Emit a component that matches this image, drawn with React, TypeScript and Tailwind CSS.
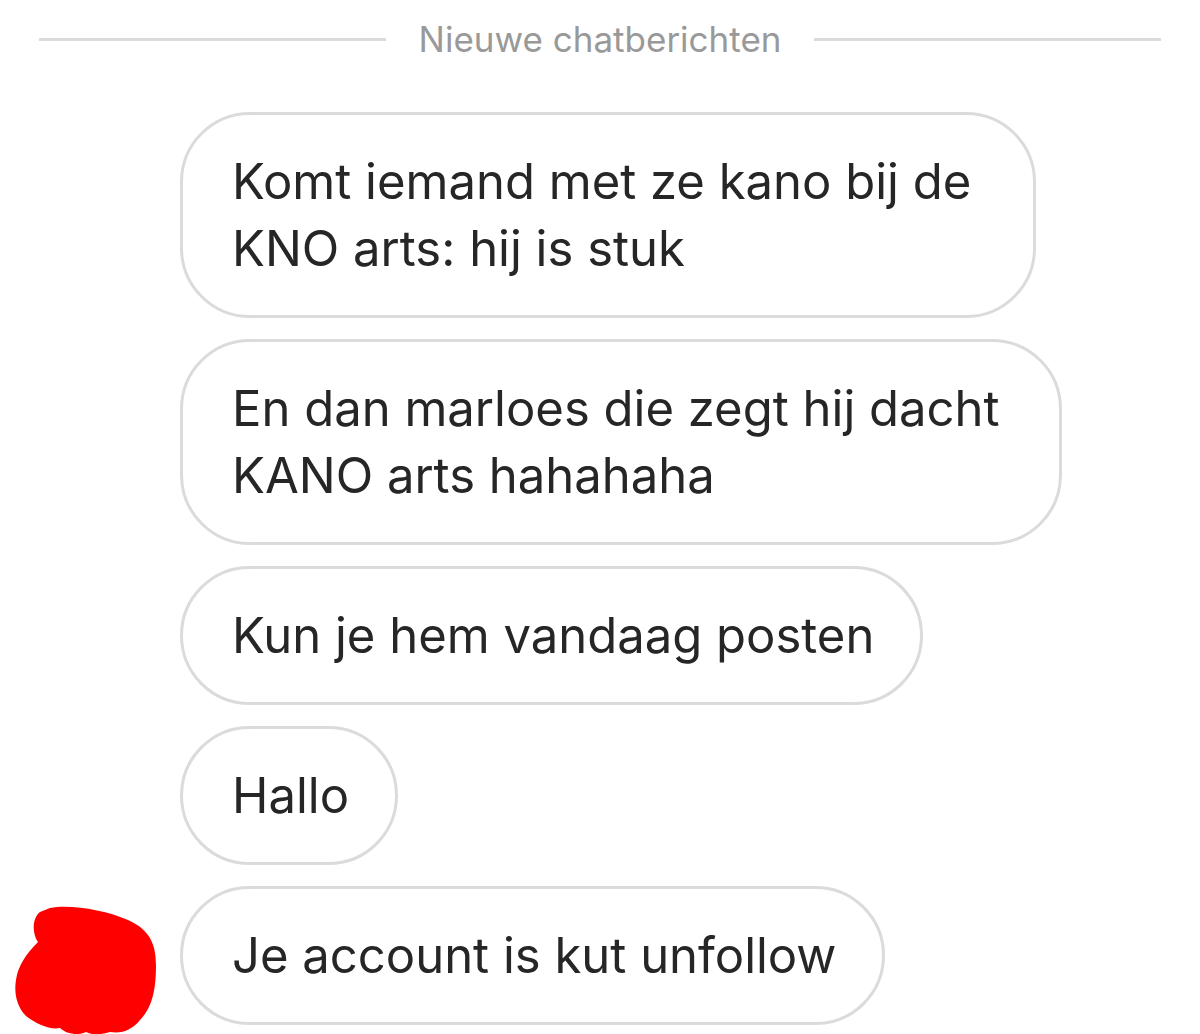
import React from "react";

const messages: { lines: string[]; width?: string }[] = [
  { lines: ["Komt iemand met ze kano bij de", "KNO arts: hij is stuk"], width: "w-[856px]" },
  { lines: ["En dan marloes die zegt hij dacht", "KANO arts hahahaha"], width: "w-[882px]" },
  { lines: ["Kun je hem vandaag posten"] },
  { lines: ["Hallo"] },
  { lines: ["Je account is kut unfollow"] },
];

function Scribble() {
  return (
    <svg
      className="absolute left-[10px] top-[18px]"
      width="150"
      height="130"
      viewBox="0 0 150 130"
    >
      <path
        d="M40 4 C60 0 95 6 118 16 C140 26 146 40 146 62 C146 86 142 104 130 116 C122 126 112 130 100 128 C92 130 84 132 76 128 C68 132 56 130 50 124 C40 126 26 120 16 112 C6 102 4 88 6 76 C8 62 16 50 28 38 C22 30 22 14 30 8 Z"
        fill="#ff0000"
      />
    </svg>
  );
}

function Bubble({ lines, width }: { lines: string[]; width?: string }) {
  return (
    <div
      className={`${width ?? "w-fit"} box-border border-[3px] border-[#dbdbdb] rounded-[70px] pl-[49px] pr-[46px] py-[33px] bg-white`}
    >
      {lines.map((l, i) => (
        <div key={i} className="whitespace-nowrap text-[49px] leading-[67px] text-[#262626]">
          {l}
        </div>
      ))}
    </div>
  );
}

export default function App() {
  return (
    <div
      className="h-[1034px] w-[1200px] overflow-hidden bg-white"
      style={{ fontFamily: "Inter, 'Noto Sans', sans-serif" }}
    >
      <div className="h-[78px] flex items-center px-[39px] gap-[33px]">
        <div className="flex-1 h-[3px] bg-[#dbdbdb]" />
        <span className="text-[35px] text-[#999999] whitespace-nowrap">Nieuwe chatberichten</span>
        <div className="flex-1 h-[3px] bg-[#dbdbdb]" />
      </div>

      <div className="mt-[34px] flex flex-col gap-[21px]">
        {messages.map((m, i) => (
          <div key={i} className="flex">
            <div className="relative w-[180px] shrink-0">
              {i === messages.length - 1 && <Scribble />}
            </div>
            <Bubble lines={m.lines} width={m.width} />
          </div>
        ))}
      </div>
    </div>
  );
}
